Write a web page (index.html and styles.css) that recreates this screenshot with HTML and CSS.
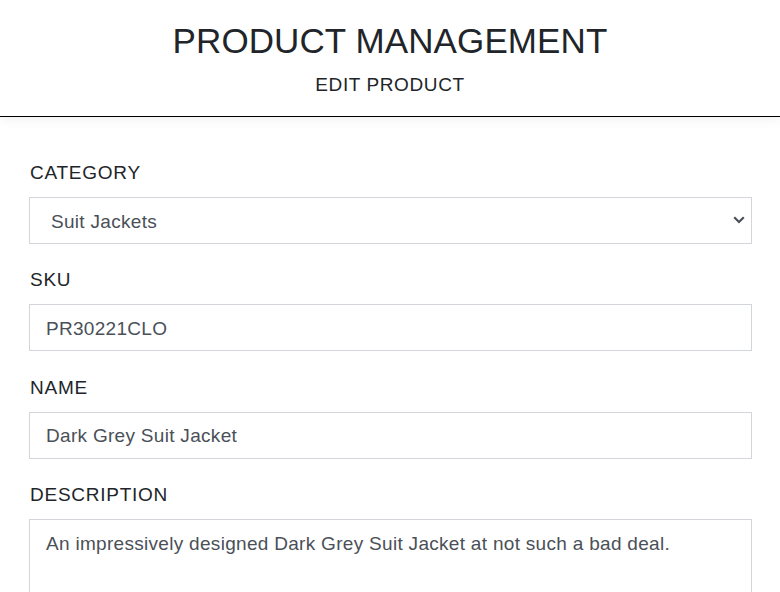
FILE: index.html
```html
<!DOCTYPE html>
<html lang="en">
<head>
<meta charset="utf-8">
<title>Product Management</title>
<link rel="stylesheet" href="styles.css">
</head>
<body>
<header class="header">
  <h1 class="title">PRODUCT MANAGEMENT</h1>
  <h2 class="subtitle">EDIT PRODUCT</h2>
</header>
<form class="form">
  <div class="group">
    <label class="label" for="cat">CATEGORY</label>
    <div class="select-wrap">
      <select id="cat" class="control select">
        <option>Suit Jackets</option>
      </select>
      <svg class="chevron" width="12" height="8" viewBox="0 0 12 8"><path d="M1.2 1.3 L6 6 L10.8 1.3" fill="none" stroke="#4a5058" stroke-width="2.2"/></svg>
    </div>
  </div>
  <div class="group">
    <label class="label" for="sku">SKU</label>
    <input id="sku" class="control" type="text" value="PR30221CLO">
  </div>
  <div class="group">
    <label class="label" for="name">NAME</label>
    <input id="name" class="control" type="text" value="Dark Grey Suit Jacket">
  </div>
  <div class="group">
    <label class="label" for="desc">DESCRIPTION</label>
    <textarea id="desc" class="control textarea">An impressively designed Dark Grey Suit Jacket at not such a bad deal.</textarea>
  </div>
</form>
</body>
</html>
```
FILE: styles.css
```css
* { box-sizing: border-box; }
html, body { margin: 0; padding: 0; background: #fff; }
body {
  font-family: "Liberation Sans", Arial, sans-serif;
  color: #212529;
}
.header {
  text-align: center;
  padding: 21px 0 20px;
  border-bottom: 1px solid #000;
  box-shadow: 0 3px 10px rgba(0,0,0,0.06);
  position: relative;
}
.title {
  margin: 0;
  font-size: 35px;
  line-height: 40px;
  font-weight: 400;
  letter-spacing: 0.1px;
}
.subtitle {
  margin: 13px 0 0;
  font-size: 19px;
  line-height: 22px;
  font-weight: 400;
  letter-spacing: 0.6px;
}
.form {
  padding: 45px 28px 0 29px;
}
.group {
  display: flex;
  flex-direction: column;
  margin-bottom: 25.3px;
}
.label {
  font-size: 19px;
  line-height: 22px;
  letter-spacing: 0.75px;
  padding-left: 1px;
  margin-bottom: 13px;
}
.control {
  display: block;
  width: 100%;
  height: 47px;
  margin: 0;
  border: 1px solid #d2d5d9;
  border-radius: 0;
  background: #fff;
  font-family: "Liberation Sans", Arial, sans-serif;
  font-size: 19px;
  letter-spacing: 0.3px;
  color: #4a5058;
  padding: 2px 16px 0;
  outline: none;
}
.select-wrap { position: relative; }
.select {
  appearance: none;
  -webkit-appearance: none;
  padding: 1px 16px 0 21px;
}
.chevron {
  position: absolute;
  right: 7px;
  top: 19px;
}
.textarea {
  height: 120px;
  padding-top: 12px;
  line-height: 24px;
  resize: none;
}
```
